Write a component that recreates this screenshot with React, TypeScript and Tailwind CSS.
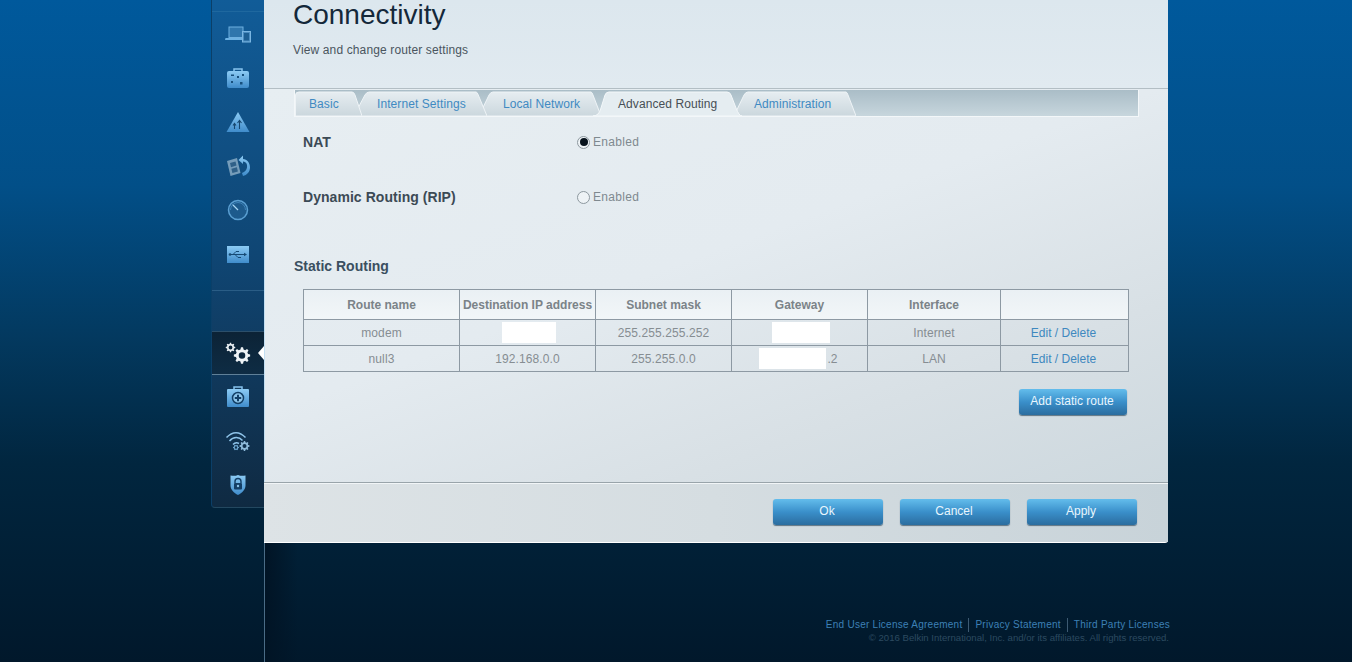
import { ReactNode } from "react";

const tabs = [
  { label: "Basic", box: "w-[67px] pl-[14px] z-50", first: true },
  { label: "Internet Settings", box: "w-[133px] pl-[23px] ml-[-8px] z-40" },
  { label: "Local Network", box: "w-[122px] pl-[24px] ml-[-8px] z-30" },
  { label: "Advanced Routing", box: "w-[149px] pl-[25px] ml-[-8px] z-[60]", active: true },
  { label: "Administration", box: "w-[122px] pl-[20px] ml-[-8px] z-20" },
];

function gearPath(cx: number, cy: number, r: number, teeth: number) {
  const pts: string[] = [];
  const step = (Math.PI * 2) / teeth;
  for (let i = 0; i < teeth; i++) {
    const a = i * step;
    const seq: [number, number][] = [
      [a - step * 0.32, r * 0.76],
      [a - step * 0.16, r],
      [a + step * 0.16, r],
      [a + step * 0.32, r * 0.76],
    ];
    seq.forEach(([t, d]) => {
      pts.push(`${(cx + Math.cos(t) * d).toFixed(2)} ${(cy + Math.sin(t) * d).toFixed(2)}`);
    });
  }
  const h = r * 0.4;
  return `M${pts.join("L")}Z M${cx - h} ${cy}a${h} ${h} 0 1 0 ${h * 2} 0a${h} ${h} 0 1 0 ${-h * 2} 0Z`;
}

function Glyph({ children }: { children: ReactNode }) {
  return (
    <svg width="28" height="24" viewBox="0 0 28 24" fill="none">
      {children}
    </svg>
  );
}

const icons = {
  devices: (
    <Glyph>
      <path d="M4.500 4.500h15v11.500h-15z" fill="#6fb0e0" />
      <path d="M5.500 5.500h13v9.500h-13z" fill="#2f76ad" />
      <path d="M1.500 16h18.500v2H1z" fill="#6db1e2" />
      <rect x="18.500" y="9.500" width="8" height="10.500" fill="#4a8cc0" stroke="#7ab6e2" />
      <rect x="20" y="11" width="5" height="7.500" fill="#1d5f93" />
    </Glyph>
  ),
  toolbox: (
    <Glyph>
      <path d="M10 5V3h8v2" stroke="#86c3ee" strokeWidth="1.500" />
      <rect x="3" y="5" width="22" height="17" rx="2" fill="url(#navBlue)" />
      <g fill="#17507e">
        <rect x="7" y="8.500" width="3" height="1.500" />
        <rect x="13" y="10" width="2" height="2" />
        <rect x="18" y="8" width="2" height="2" />
        <rect x="7" y="15" width="2" height="2" />
        <rect x="16" y="16" width="2.500" height="2.500" />
      </g>
    </Glyph>
  ),
  road: (
    <Glyph>
      <path d="M14 2 25.500 22H2.500z" fill="url(#navBlue)" />
      <path d="M10.500 19v-4.500M9 15.500l1.500-2 1.500 2M15.500 19v-8M13.500 13l2-2.500 2 2.500" stroke="#17476f" strokeWidth="1.100" />
    </Glyph>
  ),
  backup: (
    <Glyph>
      <path d="m3 7 10-3 3.500 15-10 3z" fill="#8fb0c8" opacity=".8" />
      <path d="m6 9 5.500-1.600 1 4.200-5.500 1.600zm1.400 5.800 5.500-1.600 1 4.200-5.500 1.600z" fill="#2f6088" />
      <path d="M19 1.500 14.500 6l4.500 4V7.500c3.500.5 4.500 3 4 6-.4 2.500-2 4.500-5 5.500l1 3c4-1 7-4 7-8.500 0-5-3-8-7-8.500z" fill="url(#navBlue)" />
    </Glyph>
  ),
  gauge: (
    <Glyph>
      <circle cx="14" cy="12" r="9.500" fill="#1d5a8c" stroke="#5a9fd2" strokeWidth="1.500" />
      <path d="m8.500 6.500 5.500 5.500" stroke="#a9d6f4" strokeWidth="1.300" />
      <path d="M6.500 12a7.500 7.500 0 0 1 15 0" stroke="#3d82b8" />
    </Glyph>
  ),
  usb: (
    <Glyph>
      <rect x="3" y="4" width="22" height="17" fill="url(#navBlue)" />
      <path d="M5 12.500h17M9 12.500l3-3h3M11 12.500l3 3h3" stroke="#164a74" strokeWidth="1" />
      <path d="m23 12.500-3-1.800v3.600z" fill="#164a74" />
      <circle cx="6" cy="12.500" r="1.300" fill="#164a74" />
    </Glyph>
  ),
  gears: (
    <Glyph>
      <path d={gearPath(6.500, 6.500, 4.800, 8)} fill="#e8eef2" fillRule="evenodd" />
      <path d={gearPath(18, 14.500, 8.200, 8)} fill="#eef3f6" fillRule="evenodd" />
    </Glyph>
  ),
  medkit: (
    <Glyph>
      <path d="M10 4V2h8v2" stroke="#86c3ee" strokeWidth="1.500" />
      <rect x="3" y="4" width="22" height="18" rx="1" fill="url(#navBlue)" />
      <circle cx="14" cy="13" r="5.500" fill="#8cc4ea" stroke="#123f66" strokeWidth="1.500" />
      <path d="M14 9.800v6.400M10.800 13h6.400" stroke="#123f66" strokeWidth="2" />
    </Glyph>
  ),
  wifi: (
    <Glyph>
      <path d="M2.500 8.500c6-6.500 13-6.500 19 0M5.500 12c4-4.500 9.500-4.500 13-.5M9 15.500c1.800-2 4-2.200 6-1" stroke="#8fc4ea" strokeWidth="1.500" />
      <path d={gearPath(12, 18.500, 3, 6)} fill="#6fa8d2" fillRule="evenodd" />
      <path d={gearPath(20.500, 17, 5, 8)} fill="#8fbcdc" fillRule="evenodd" />
    </Glyph>
  ),
  shield: (
    <Glyph>
      <path d="M6.500 2.500c3 .5 5 .5 7.500-.5 2.500 1 4.500 1 7.500 .5v10c0 4-3.500 7.500-7.500 9.500-4-2-7.500-5.500-7.500-9.500z" fill="url(#navBlue)" />
      <path d="M11 10V8.500a3 3 0 0 1 6 0V10" stroke="#143f66" strokeWidth="1.400" />
      <rect x="10" y="10" width="8" height="6.500" rx="1" fill="#143f66" />
      <circle cx="14" cy="13" r="1.200" fill="#8cc4ea" />
    </Glyph>
  ),
};

function NavItem({ icon }: { icon: ReactNode }) {
  return <div className="flex h-[44px] items-center justify-center">{icon}</div>;
}

function Sidebar() {
  return (
    <nav className="flex h-[508px] w-[53px] shrink-0 flex-col rounded-bl-sm border-b border-l border-b-[#234860] border-l-[#0b3f68] bg-gradient-to-b from-[#115c98] via-[#0f4674] to-[#0f2a42]">
      <div className="h-[12px] border-b border-[#1f689f]" />
      <NavItem icon={icons.devices} />
      <NavItem icon={icons.toolbox} />
      <NavItem icon={icons.road} />
      <NavItem icon={icons.backup} />
      <NavItem icon={icons.gauge} />
      <NavItem icon={icons.usb} />
      <div className="h-[15px] border-b border-[#2a5d86]" />
      <div className="h-[40px]" />
      <div className="relative flex h-[44px] items-center justify-center border-y border-t-[#2c4f6a] border-b-[#5f8098] bg-gradient-to-b from-[#0c2336] to-[#0e2c44]">
        {icons.gears}
        <div className="absolute right-0 top-[14px] h-0 w-0 border-y-[7px] border-r-[6px] border-y-transparent border-r-white" />
      </div>
      <NavItem icon={icons.medkit} />
      <NavItem icon={icons.wifi} />
      <NavItem icon={icons.shield} />
    </nav>
  );
}

function Tab({ label, box, first, active }: { label: string; box: string; first?: boolean; active?: boolean }) {
  const d = first
    ? "M0.500 26V5Q0.500 2 4 2H57Q59 2 60 5L67 26Z"
    : active
      ? "M0 26Q6 26 8 18L12 5Q13 2 16 2H134Q137 2 138 5L143 18Q146 26 149 26Z"
      : "M0 26L10 5Q11.500 2 14 2H112Q113 2 114 5L122 26Z";
  return (
    <div className={`relative h-[26px] shrink-0 ${box}`}>
      <svg className="absolute inset-0 h-full w-full" preserveAspectRatio="none" viewBox={first ? "0 0 67 26" : active ? "0 0 149 26" : "0 0 122 26"}>
        <path d={d} fill={active ? "#e5edf1" : "url(#tabFill)"} stroke={active ? "#f4f8fa" : "#eef3f6"} vectorEffect="non-scaling-stroke" />
      </svg>
      <span className={`relative block pt-[6px] text-[12px] leading-[16px] tracking-[0.08px] ${active ? "text-[#474f55]" : "text-[#3f8ac2]"}`}>{label}</span>
    </div>
  );
}

function BlueButton({ label, wide }: { label: string; wide?: boolean }) {
  return (
    <button className={`h-[26px] rounded-[3px] bg-gradient-to-b from-[#63bdec] via-[#3a8fca] to-[#2b6d9f] pb-[2px] pr-[2px] text-[12px] text-[#e9f6fd] shadow-[0_1px_1px_#5f7482] ${wide ? "w-[108px]" : "w-[110px]"}`}>
      {label}
    </button>
  );
}

function Hidden({ w, children }: { w: string; children?: ReactNode }) {
  return (
    <span className="inline-flex items-center align-middle">
      <span className={`inline-block h-[21px] bg-white ${w}`} />
      {children}
    </span>
  );
}

function RadioRow({ title, on, h }: { title: string; on?: boolean; h: string }) {
  return (
    <div className={`flex items-start pl-[38px] ${h}`}>
      <div className="w-[274px] text-[14px] font-bold leading-[18px] tracking-[0.05px] text-[#3c4a55]">{title}</div>
      <div className="mt-[1px] flex items-center">
        <div className="flex h-[13px] w-[13px] items-center justify-center rounded-full border border-[#8d989f] bg-[#eef3f6]">
          {on && <div className="h-[8px] w-[8px] rounded-full bg-[#07121c]" />}
        </div>
        <span className="ml-[3px] text-[12px] leading-[16px] tracking-[0.3px] text-[#7f898f]">Enabled</span>
      </div>
    </div>
  );
}

const th = "border border-[#8d99a3] font-bold text-[#7b8388]";
const td = "border border-[#8d99a3] font-normal tracking-[0.1px] text-[#868d92]";

function RowActions() {
  return <span className="pr-[2px] tracking-normal text-[#3e88bf]">Edit / Delete</span>;
}

function RouteTable() {
  return (
    <table className="ml-[38px] w-[825px] table-fixed border-collapse text-center text-[12px]">
      <colgroup>
        <col className="w-[156px]" />
        <col className="w-[136px]" />
        <col className="w-[136px]" />
        <col className="w-[136px]" />
        <col className="w-[133px]" />
        <col className="w-[128px]" />
      </colgroup>
      <thead>
        <tr className="h-[30px] bg-gradient-to-b from-[#eaf0f4] to-[#f2f6f8]">
          <th className={th}>Route name</th>
          <th className={`${th} whitespace-nowrap`}>Destination IP address</th>
          <th className={th}>Subnet mask</th>
          <th className={th}>Gateway</th>
          <th className={th}>Interface</th>
          <th className={th} />
        </tr>
      </thead>
      <tbody>
        <tr className="h-[26px]">
          <td className={td}>modem</td>
          <td className={td}>
            <Hidden w="w-[54px] ml-[2px]" />
          </td>
          <td className={td}>255.255.255.252</td>
          <td className={td}>
            <Hidden w="w-[58px] ml-[2px]" />
          </td>
          <td className={td}>Internet</td>
          <td className={td}>
            <RowActions />
          </td>
        </tr>
        <tr className="h-[26px]">
          <td className={td}>null3</td>
          <td className={td}>192.168.0.0</td>
          <td className={td}>255.255.0.0</td>
          <td className={td}>
            <Hidden w="w-[67px] ml-[-2px]">
              <span className="ml-[1px]">.2</span>
            </Hidden>
          </td>
          <td className={td}>LAN</td>
          <td className={td}>
            <RowActions />
          </td>
        </tr>
      </tbody>
    </table>
  );
}

function Panel() {
  return (
    <main className="flex h-[543px] w-[904px] shrink-0 flex-col rounded-br-[3px] border-b border-white">
      <header className="h-[89px] shrink-0 border-b border-[#b3bec4] bg-gradient-to-b from-[#dce7ee] to-[#e1eaf0] pl-[29px] pt-[1px]">
        <h1 className="text-[28px] leading-[28px] text-[#14283a]">Connectivity</h1>
        <p className="mt-[13px] text-[12px] leading-[16px] tracking-[0.13px] text-[#4a555e]">View and change router settings</p>
      </header>

      <section className="h-[393px] shrink-0 border-l border-[#c3dff2] bg-[linear-gradient(160deg,#e7eef2_0%,#e4ebf0_45%,#d8e0e5_75%,#cdd8de_100%)]">
        <div className="ml-[29px] mt-[1px] flex h-[27px] w-[845px] border-x border-b border-[#f3f7f9] bg-gradient-to-b from-[#aabdc7] to-[#c7d6dd]">
          {tabs.map((t) => (
            <Tab key={t.label} {...t} />
          ))}
        </div>
        <div className="pt-[16px]">
          <RadioRow title="NAT" on h="h-[55px]" />
          <RadioRow title="Dynamic Routing (RIP)" h="h-[60px]" />
        </div>
        <h2 className="ml-[29px] mt-[9px] text-[14px] font-bold leading-[18px] text-[#3a4f60]">Static Routing</h2>
        <div className="mt-[14px]">
          <RouteTable />
        </div>
        <div className="mt-[17px] flex justify-end pr-[41px]">
          <BlueButton label="Add static route" wide />
        </div>
      </section>

      <footer className="flex flex-1 items-start justify-end gap-[17px] border-t border-[#99a4aa] bg-gradient-to-r from-[#dde3e6] via-[#d5dde1] to-[#c8d3d9] pr-[31px] pt-[16px] shadow-[inset_0_1px_0_#f1f5f7]">
        <BlueButton label="Ok" />
        <BlueButton label="Cancel" />
        <BlueButton label="Apply" />
      </footer>
    </main>
  );
}

export default function App() {
  return (
    <div className="flex h-screen w-full flex-col overflow-hidden bg-[linear-gradient(180deg,#00599c_0%,#024f88_28%,#03395f_51%,#01263f_70%,#01182b_100%)] font-['Liberation_Sans',Arial,sans-serif]">
      <svg className="h-0 w-0 shrink-0">
        <defs>
          <linearGradient id="navBlue" x1="0" y1="0" x2="0" y2="1">
            <stop offset="0" stopColor="#8ccbf4" />
            <stop offset="1" stopColor="#3f8ccb" />
          </linearGradient>
          <linearGradient id="tabFill" x1="0" y1="0" x2="0" y2="1">
            <stop offset="0" stopColor="#e6edf1" />
            <stop offset="1" stopColor="#cbd7dd" />
          </linearGradient>
        </defs>
      </svg>
      <div className="flex shrink-0 items-start pl-[211px]">
        <Sidebar />
        <Panel />
      </div>
      <div className="ml-[264px] flex-1 border-l border-[#4a6c86] bg-gradient-to-r from-[#011425] to-transparent to-[3%] pr-[182px] pt-[75px] text-right">
        <div className="flex justify-end pr-0 text-[10px] leading-[14px] tracking-[0.25px] text-[#3d80b6]">
          <span className="border-r border-[#3d5a72] pr-[6px]">End User License Agreement</span>
          <span className="border-r border-[#3d5a72] px-[6px]">Privacy Statement</span>
          <span className="pl-[6px]">Third Party Licenses</span>
        </div>
        <p className="pr-[1px] text-[9.6px] leading-[11px] text-[#2c4a60]">© 2016 Belkin International, Inc. and/or its affiliates. All rights reserved.</p>
      </div>
    </div>
  );
}
